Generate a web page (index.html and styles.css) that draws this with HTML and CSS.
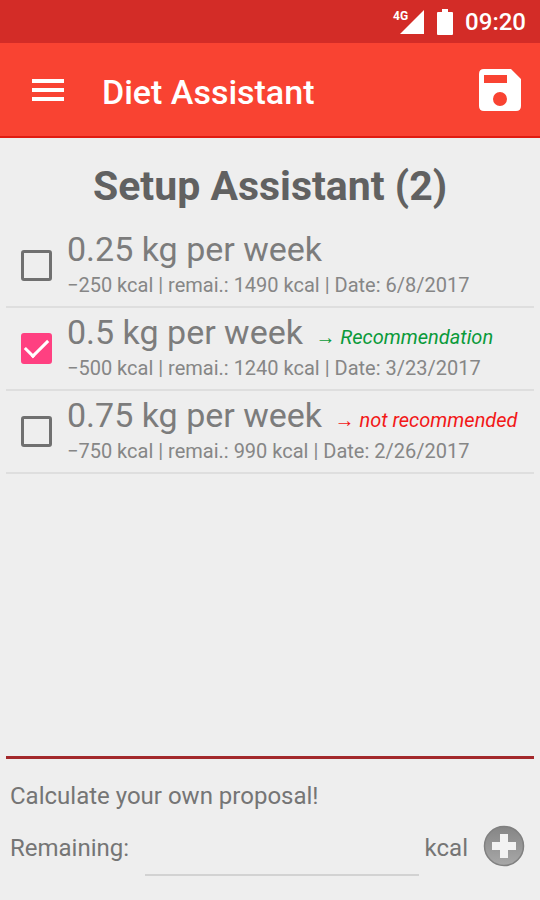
FILE: index.html
```html
<!DOCTYPE html>
<html lang="en">
<head>
<meta charset="utf-8">
<meta name="viewport" content="width=device-width, initial-scale=1">
<title>Diet Assistant</title>
<link rel="stylesheet" href="styles.css">
</head>
<body>
<div class="status-bar">
  <svg class="signal" viewBox="0 0 32 28" aria-hidden="true"><path d="M32 2v24H8z"/><text x="1" y="12">4G</text></svg>
  <svg class="battery" viewBox="0 0 16 26" aria-hidden="true"><path d="M5 0h6v3h4q1 0 1 1v21q0 1-1 1H1q-1 0-1-1V4q0-1 1-1h4z"/></svg>
  <time>09:20</time>
</div>
<header class="app-bar">
  <button class="icon-button" type="button" aria-label="Menu">
    <svg class="menu-icon" viewBox="0 0 32 24" aria-hidden="true"><path d="M0 1h32v4H0zM0 10h32v4H0zM0 19h32v4H0z"/></svg>
  </button>
  <h1>Diet Assistant</h1>
  <button class="icon-button" type="button" aria-label="Save">
    <svg class="save-icon" viewBox="0 0 42 42" aria-hidden="true"><path fill-rule="evenodd" d="M5 0h27l10 10v27q0 5-5 5H5q-5 0-5-5V5q0-5 5-5zM5 6v8h23V6zM21 23a7 7 0 1 0 0 14 7 7 0 0 0 0-14z"/></svg>
  </button>
</header>
<main>
  <h2>Setup Assistant (2)</h2>
  <ul class="options">
    <li>
      <input type="checkbox" id="slow">
      <label for="slow">
        <span class="rate">0.25 kg per week</span>
        <span class="detail">−250 kcal | remai.: 1490 kcal | Date: 6/8/2017</span>
      </label>
    </li>
    <li>
      <input type="checkbox" id="medium" checked>
      <label for="medium">
        <span class="rate">0.5 kg per week <em class="good">→ Recommendation</em></span>
        <span class="detail">−500 kcal | remai.: 1240 kcal | Date: 3/23/2017</span>
      </label>
    </li>
    <li>
      <input type="checkbox" id="fast">
      <label for="fast">
        <span class="rate">0.75 kg per week <em class="bad">→ not recommended</em></span>
        <span class="detail">−750 kcal | remai.: 990 kcal | Date: 2/26/2017</span>
      </label>
    </li>
  </ul>
  <form class="proposal">
    <p>Calculate your own proposal!</p>
    <div class="entry">
      <label for="remaining">Remaining:</label>
      <input type="text" id="remaining" inputmode="numeric">
      <span>kcal</span>
      <button class="icon-button" type="button" aria-label="Add">
        <svg class="add-icon" viewBox="0 0 42 42" aria-hidden="true">
          <defs><linearGradient id="shade" x2="0" y2="1"><stop stop-color="#858585"/><stop offset="1" stop-color="#a8a8a8"/></linearGradient></defs>
          <circle cx="21" cy="21" r="19.5" fill="url(#shade)" stroke="#808080" stroke-width="1.5"/>
          <path d="M17 9h8v8h8v8h-8v8h-8v-8H9v-8h8z" fill="#f2f2f2"/>
        </svg>
      </button>
    </div>
  </form>
</main>
</body>
</html>
```
FILE: styles.css
```css
* {
  box-sizing: border-box;
}

body {
  display: flex;
  flex-direction: column;
  min-height: 100vh;
  margin: 0;
  background: #eee;
  color: #757575;
  font-family: Roboto, "Liberation Sans", sans-serif;
}

h1,
h2,
p,
ul {
  margin: 0;
  padding: 0;
}

.status-bar {
  display: flex;
  align-items: center;
  justify-content: flex-end;
  height: 43px;
  padding: 0 14px;
  background: #d32c27;
  color: #fff;
  font-size: 24px;
  font-weight: 500;
}

.signal {
  width: 32px;
  height: 28px;
  margin-right: 13px;
  fill: #fff;
  font-size: 12px;
  font-weight: 700;
}

.battery {
  width: 16px;
  height: 26px;
  margin-right: 12px;
  fill: #fff;
}

.app-bar {
  display: flex;
  align-items: center;
  height: 95px;
  padding: 0 19px 0 32px;
  border-bottom: 2px solid #e01c12;
  background: #f94332;
  color: #fff;
}

.app-bar h1 {
  flex: 1;
  padding: 4px 0 0 38px;
  font-size: 34px;
  font-weight: 500;
}

.icon-button {
  display: flex;
  padding: 0;
  border: 0;
  background: none;
  color: inherit;
}

.menu-icon {
  width: 32px;
  height: 24px;
  fill: #fff;
}

.save-icon,
.add-icon {
  width: 42px;
  height: 42px;
}

.save-icon {
  fill: #fff;
}

main {
  display: flex;
  flex: 1;
  flex-direction: column;
  padding: 0 6px;
}

h2 {
  padding: 22px 0 13px;
  color: #616161;
  font-size: 41px;
  font-weight: 700;
  line-height: 52px;
  text-align: center;
}

.options {
  flex: 1;
  list-style: none;
}

.options li {
  display: flex;
  align-items: center;
  gap: 15px;
  height: 83px;
  padding-left: 15px;
  border-bottom: 2px solid #dedede;
}

.options input {
  display: grid;
  flex: none;
  place-items: center;
  width: 31px;
  height: 31px;
  margin: 0;
  border: 3px solid #707070;
  border-radius: 3px;
  appearance: none;
}

.options input:checked {
  border-color: #ff4081;
  background: #ff4081;
}

.options input:checked::before {
  width: 20px;
  height: 10px;
  margin-bottom: 7px;
  border: solid #fff;
  border-width: 0 0 3px 3px;
  content: "";
  transform: rotate(-45deg);
}

.options label {
  flex: 1;
  padding-bottom: 6px;
  white-space: nowrap;
}

.rate,
.detail {
  display: block;
}

.rate {
  color: #7c7c7c;
  font-size: 34px;
  line-height: 44px;
}

.rate em {
  margin-left: 4px;
  font-size: 20px;
  line-height: 20px;
}

.good {
  color: #0a9a3a;
}

.bad {
  color: #f21818;
}

.detail {
  color: #868686;
  font-size: 20px;
  line-height: 28px;
}

.proposal {
  padding: 21px 4px 24px;
  border-top: 3px solid #a3282b;
  font-size: 24px;
  line-height: 32px;
}

.entry {
  display: flex;
  align-items: center;
  padding-top: 8px;
}

.entry input {
  flex: 1;
  min-width: 0;
  height: 56px;
  margin: 0 6px 0 16px;
  border: 0;
  border-bottom: 2px solid #d2d2d2;
  background: none;
  color: inherit;
  font: inherit;
}

.entry .icon-button {
  margin: 0 5px 4px 15px;
}
```
